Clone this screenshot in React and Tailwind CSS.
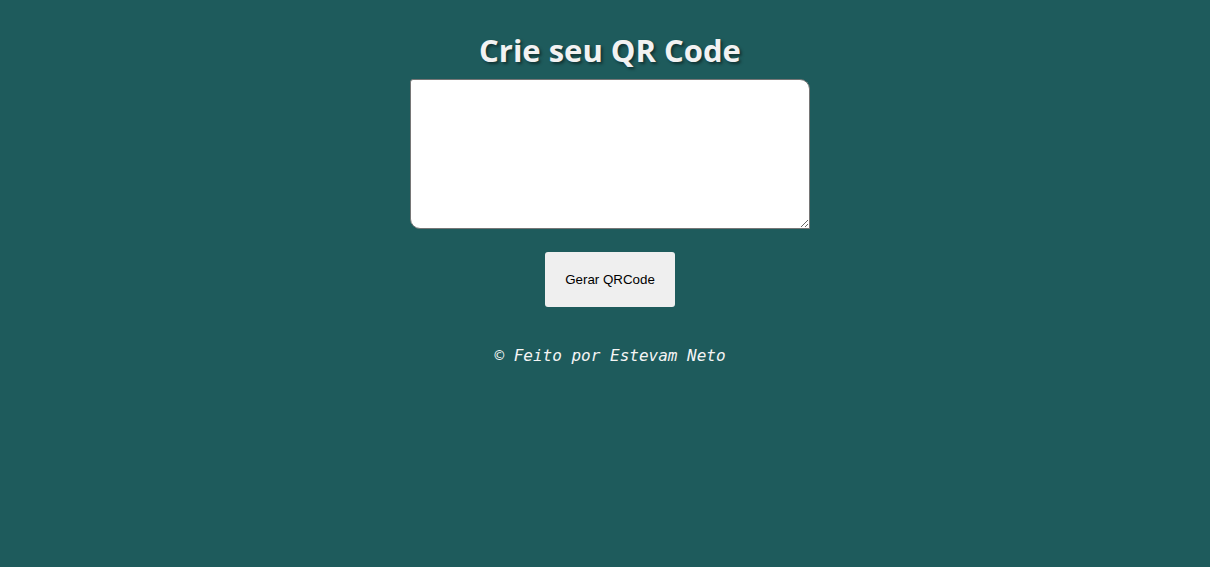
export default function App() {
  return (
    <div className="min-h-screen w-full bg-[#1e5b5c] flex flex-col items-center pl-[10px]">
      <h1 className="mt-[30px] text-[31px] leading-[40px] font-bold text-[#f2f2f2] font-['Open_Sans','Noto_Sans',sans-serif] [text-shadow:2px_2px_3px_rgba(0,0,0,0.45)]">
        Crie seu QR Code
      </h1>
      <textarea className="mt-[9px] w-[400px] h-[150px] bg-white border border-[#767676] rounded-tl-[3px] rounded-tr-[10px] rounded-bl-[10px] rounded-br-none resize" />
      <button className="mt-[23px] w-[130px] h-[55px] bg-[#efefef] rounded-[3px] text-[13.33px] text-black font-['Liberation_Sans',Arial,sans-serif]">
        Gerar QRCode
      </button>
      <p className="mt-[39px] text-[16px] leading-[20px] italic text-[#f5f5f5] font-['DejaVu_Sans_Mono',monospace]">
        © Feito por Estevam Neto
      </p>
    </div>
  );
}
